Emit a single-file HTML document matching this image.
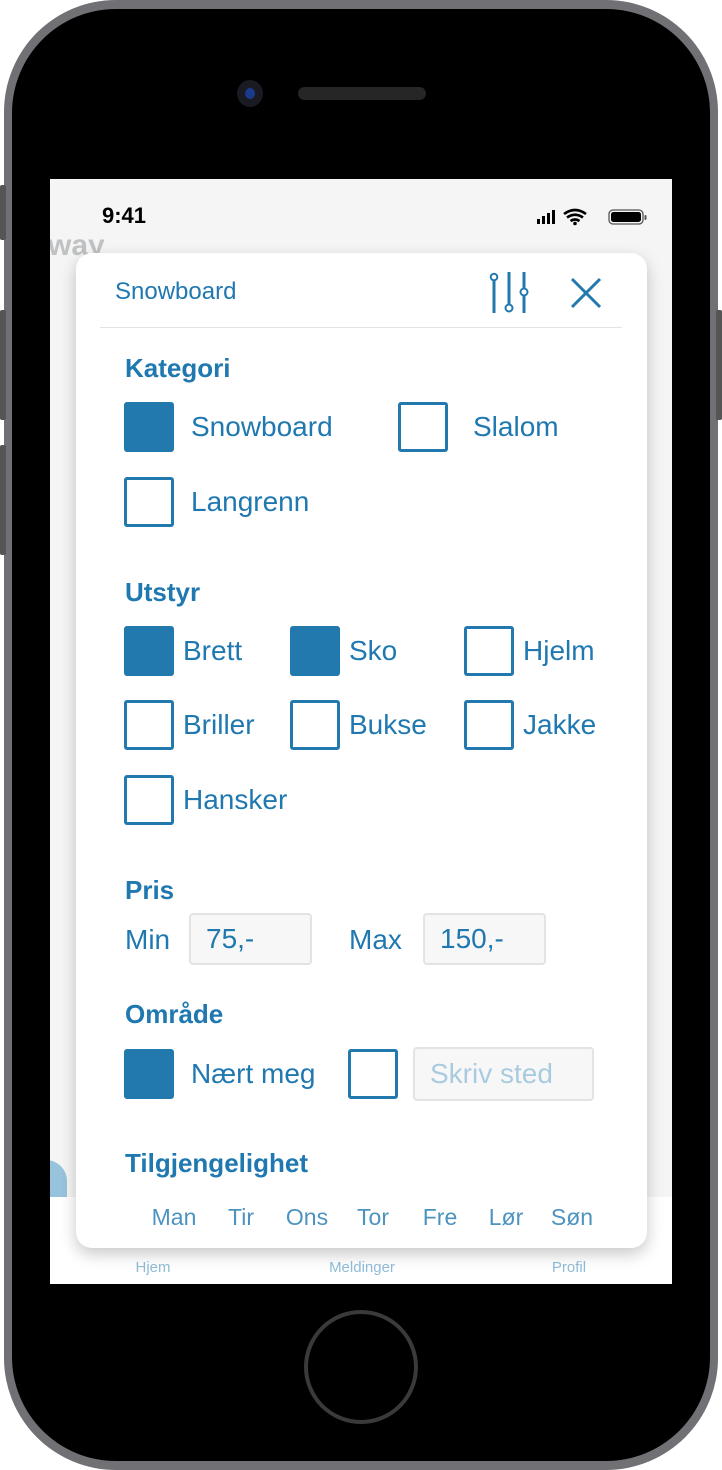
<!DOCTYPE html>
<html><head><meta charset="utf-8"><style>
*{margin:0;padding:0;box-sizing:border-box}
body{width:722px;height:1470px;background:#fff;position:relative;overflow:hidden;font-family:"Liberation Sans",sans-serif}
.a{position:absolute}
.t{position:absolute;color:#1f78b0;white-space:nowrap;line-height:1}
.h{font-weight:bold;font-size:26px}
.l{font-size:28px}
.cb{position:absolute;width:50px;height:50px;border:3px solid #2279ae;border-radius:3px;background:#fff}
.cb.f{background:#2279ae}
.in{position:absolute;border:2px solid #e3e3e3;border-radius:4px;background:#f7f7f7;font-size:28px;color:#1f78b0;padding-left:15px;line-height:48px}
.d{position:absolute;top:1204px;font-size:23px;color:#4d93c0;transform:translateX(-50%)}
.n{position:absolute;top:1259px;font-size:15px;color:#8fbcd9;transform:translateX(-50%)}
</style></head><body>
<div class="a" style="left:4px;top:0;width:714px;height:1470px;border-radius:112px;background:#707075"></div>
<div class="a" style="left:0;top:185px;width:6px;height:55px;background:#555;border-radius:2px"></div>
<div class="a" style="left:0;top:310px;width:6px;height:110px;background:#555;border-radius:2px"></div>
<div class="a" style="left:0;top:445px;width:6px;height:110px;background:#555;border-radius:2px"></div>
<div class="a" style="left:716px;top:310px;width:6px;height:110px;background:#555;border-radius:2px"></div>
<div class="a" style="left:12px;top:9px;width:698px;height:1452px;border-radius:104px;background:#000"></div>
<div class="a" style="left:237px;top:80px;width:26px;height:27px;border-radius:50%;background:#1a1a22"></div>
<div class="a" style="left:245px;top:88px;width:10px;height:11px;border-radius:50%;background:#1c3a8a"></div>
<div class="a" style="left:298px;top:87px;width:128px;height:13px;border-radius:7px;background:#262626"></div>
<div class="a" style="left:304px;top:1310px;width:114px;height:114px;border-radius:50%;border:4px solid #3a3a3c;background:#000"></div>
<!-- screen -->
<div class="a" style="left:50px;top:179px;width:622px;height:1105px;background:#f5f5f5;overflow:hidden">
 <div class="a" style="left:-25px;top:981px;width:42px;height:37px;border-radius:40px 40px 0 0;background:#97c3dc"></div>
 <div class="a" style="left:0;top:1018px;width:622px;height:87px;background:#fff"></div>
 <div class="a" style="left:-2px;top:50px;font-size:30px;color:#bfc1c3;font-weight:bold">way</div>
</div>
<div class="t" style="left:102px;top:205px;font-size:22px;font-weight:bold;color:#000">9:41</div>
<svg class="a" style="left:535px;top:207px" width="115" height="20" viewBox="0 0 115 20">
<rect x="2" y="12" width="3" height="5" fill="#000"/><rect x="7" y="9" width="3" height="8" fill="#000"/><rect x="12" y="6" width="3" height="11" fill="#000"/><rect x="17" y="3" width="3" height="14" fill="#000"/>
<path d="M29 7 Q40 -1 51 7 M32 10.5 Q40 5 48 10.5 M35.5 14 Q40 11 44.5 14" stroke="#000" stroke-width="2.6" fill="none"/><circle cx="40" cy="16.5" r="1.8" fill="#000"/>
<rect x="74" y="3" width="34" height="14" rx="4" fill="none" stroke="#555" stroke-width="1.3"/><rect x="76" y="5" width="30" height="10" rx="2.5" fill="#000"/><rect x="109.5" y="8" width="2" height="5" rx="1" fill="#555"/>
</svg>
<div class="n" style="left:153px">Hjem</div>
<div class="n" style="left:362px">Meldinger</div>
<div class="n" style="left:569px">Profil</div>
<!-- modal -->
<div class="a" style="left:76px;top:253px;width:571px;height:995px;background:#fff;border-radius:16px;box-shadow:0 6px 16px rgba(0,0,0,.22)"></div>
<div class="t" style="left:115px;top:280px;font-size:24px">Snowboard</div>
<svg class="a" style="left:488px;top:270px" width="44" height="46" viewBox="0 0 44 46" fill="none" stroke="#2279ae" stroke-width="3">
<line x1="6" y1="11" x2="6" y2="43"/><circle cx="6" cy="7" r="3.3" stroke-width="2"/>
<line x1="21" y1="2" x2="21" y2="34"/><circle cx="21" cy="38" r="3.5" stroke-width="2"/>
<line x1="36" y1="2" x2="36" y2="18"/><line x1="36" y1="26" x2="36" y2="43"/><circle cx="36" cy="22" r="3.5" stroke-width="2"/>
</svg>
<svg class="a" style="left:570px;top:277px" width="32" height="32" viewBox="0 0 32 32" stroke="#2279ae" stroke-width="3"><line x1="2" y1="2" x2="30" y2="30"/><line x1="30" y1="2" x2="2" y2="30"/></svg>
<div class="a" style="left:100px;top:327px;width:522px;height:1px;background:#e2e4e6"></div>

<div class="t h" style="left:125px;top:355px">Kategori</div>
<div class="cb f" style="left:124px;top:402px"></div><div class="t l" style="left:191px;top:413px">Snowboard</div>
<div class="cb" style="left:398px;top:402px"></div><div class="t l" style="left:473px;top:413px">Slalom</div>
<div class="cb" style="left:124px;top:477px"></div><div class="t l" style="left:191px;top:488px">Langrenn</div>

<div class="t h" style="left:125px;top:579px">Utstyr</div>
<div class="cb f" style="left:124px;top:626px"></div><div class="t l" style="left:183px;top:637px">Brett</div>
<div class="cb f" style="left:290px;top:626px"></div><div class="t l" style="left:349px;top:637px">Sko</div>
<div class="cb" style="left:464px;top:626px"></div><div class="t l" style="left:523px;top:637px">Hjelm</div>
<div class="cb" style="left:124px;top:700px"></div><div class="t l" style="left:183px;top:711px">Briller</div>
<div class="cb" style="left:290px;top:700px"></div><div class="t l" style="left:349px;top:711px">Bukse</div>
<div class="cb" style="left:464px;top:700px"></div><div class="t l" style="left:523px;top:711px">Jakke</div>
<div class="cb" style="left:124px;top:775px"></div><div class="t l" style="left:183px;top:786px">Hansker</div>

<div class="t h" style="left:125px;top:877px">Pris</div>
<div class="t l" style="left:125px;top:926px">Min</div>
<div class="in" style="left:189px;top:913px;width:123px;height:52px">75,-</div>
<div class="t l" style="left:349px;top:926px">Max</div>
<div class="in" style="left:423px;top:913px;width:123px;height:52px">150,-</div>

<div class="t h" style="left:125px;top:1001px">Område</div>
<div class="cb f" style="left:124px;top:1049px"></div><div class="t l" style="left:191px;top:1060px">Nært meg</div>
<div class="cb" style="left:348px;top:1049px"></div>
<div class="in" style="left:413px;top:1047px;width:181px;height:54px;color:#a9cbe0;line-height:50px">Skriv sted</div>

<div class="t h" style="left:125px;top:1150px">Tilgjengelighet</div>
<div class="d" style="left:174px">Man</div>
<div class="d" style="left:241px">Tir</div>
<div class="d" style="left:307px">Ons</div>
<div class="d" style="left:373px">Tor</div>
<div class="d" style="left:440px">Fre</div>
<div class="d" style="left:506px">Lør</div>
<div class="d" style="left:572px">Søn</div>
</body></html>
